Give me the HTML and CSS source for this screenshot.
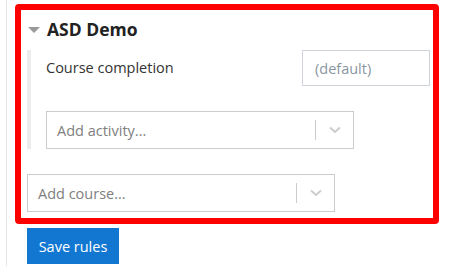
FILE: index.html
```html
<!DOCTYPE html>
<html lang="en">
<head>
    <meta charset="UTF-8">
    <title>Completion rules</title>
    <link rel="stylesheet" href="styles.css">
</head>
<body>
    <div class="page">
        <div class="rulebox">
            <div class="course-title">
                <span class="caret"></span>
                <span>ASD Demo</span>
            </div>
            <div class="course-rules">
                <div class="rule-row">
                    <span class="rule-label">Course completion</span>
                    <div class="text-field">(default)</div>
                </div>
                <div class="select-box activity-select">
                    <span class="select-text">Add activity...</span>
                    <span class="select-sep"></span>
                    <span class="select-arrow">
                        <svg width="12" height="8" viewBox="0 0 12 8"><path d="M1 1.5 L6 6 L11 1.5" fill="none" stroke="#cccccc" stroke-width="2"/></svg>
                    </span>
                </div>
            </div>
            <div class="select-box course-select">
                <span class="select-text">Add course...</span>
                <span class="select-sep"></span>
                <span class="select-arrow">
                    <svg width="12" height="8" viewBox="0 0 12 8"><path d="M1 1.5 L6 6 L11 1.5" fill="none" stroke="#cccccc" stroke-width="2"/></svg>
                </span>
            </div>
        </div>
        <button class="save-btn">Save rules</button>
    </div>
</body>
</html>
```

FILE: styles.css
```css
body {
    margin: 0;
    background: #fff;
    color: #333;
    font-family: 'Open Sans', 'Noto Sans', Arial, sans-serif;
    font-size: 14.5px;
}
.page {
    margin-left: 6px;
    padding-left: 8px;
    padding-top: 4px;
    border-left: 1px solid #e6e6e6;
    height: 262px;
}
.rulebox {
    width: 412px;
    border: 6px solid #ff0000;
    border-radius: 4px;
    padding: 6px 0 6px 0;
}
.course-title {
    display: flex;
    align-items: center;
    height: 26px;
    padding-left: 7px;
    font-size: 17.5px;
    font-weight: 700;
    color: #222;
}
.caret {
    width: 0;
    height: 0;
    border-left: 6px solid transparent;
    border-right: 6px solid transparent;
    border-top: 6px solid #999;
    margin-right: 7px;
    margin-top: 2px;
}
.course-rules {
    margin: 8px 0 0 6px;
    padding-left: 15px;
    border-left: 4px solid #ececec;
    width: 384px;
}
.rule-row {
    display: flex;
    justify-content: space-between;
    align-items: center;
    height: 36px;
    margin-bottom: 25px;
}
.rule-label {
    margin-top: -2px;
}
.text-field {
    box-sizing: border-box;
    width: 128px;
    height: 36px;
    border: 1px solid #ced4da;
    padding: 0 12px;
    display: flex;
    align-items: center;
    color: #8a96a3;
}
.select-box {
    box-sizing: border-box;
    width: 308px;
    height: 38px;
    border: 1px solid #cccccc;
    display: flex;
    align-items: center;
    color: #808080;
}
.course-select {
    margin: 25px 0 0 6px;
}
.select-text {
    flex: 1;
    padding-left: 10px;
}
.select-sep {
    width: 1px;
    height: 20px;
    background: #cccccc;
}
.select-arrow {
    width: 37px;
    display: flex;
    justify-content: center;
    align-items: center;
}
.save-btn {
    display: block;
    margin: 4px 0 0 12px;
    width: 92px;
    height: 36px;
    border: none;
    background: #1177d1;
    color: #fff;
    font-family: inherit;
    font-size: 14.5px;
    padding: 0;
}
```
